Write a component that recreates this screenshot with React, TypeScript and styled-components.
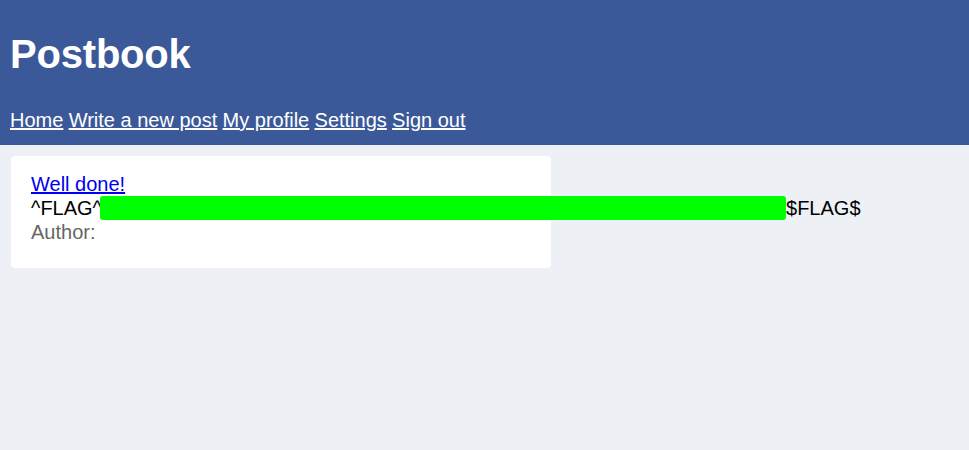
import styled, { createGlobalStyle } from 'styled-components';

const GlobalStyle = createGlobalStyle`
	html, body {
		margin: 0;
		padding: 0;
		background: #edf0f5;
		font-family: "Liberation Sans", Arial, sans-serif;
	}
`;

const Header = styled.header`
	background: #3b5998;
	color: #fff;
	padding: 10px 10px 13px;
`;

const Title = styled.h1`
	margin: 21px 0 32px;
	font-size: 40px;
	line-height: 46px;
	font-weight: bold;
	letter-spacing: -0.2px;
`;

const Nav = styled.nav`
	display: flex;
	gap: 5.3px;
	font-size: 20px;
	line-height: 23px;
`;

const NavLink = styled.a`
	color: #fff;
	text-decoration: underline;
`;

const Main = styled.main`
	padding: 11px;
`;

const Card = styled.article`
	width: 500px;
	background: #fff;
	border-radius: 4px;
	padding: 16px 20px 24px;
	font-size: 20px;
	line-height: 24px;
`;

const PostTitle = styled.a`
	color: #0000ee;
	text-decoration: underline;
`;

const Body = styled.div`
	color: #000;
	white-space: nowrap;
`;

const Redacted = styled.span`
	display: inline-block;
	width: 686px;
	height: 24px;
	margin-left: -2px;
	vertical-align: top;
	background: #00ff00;
	border-radius: 3px;
`;

const Author = styled.div`
	color: #666;
`;

export default function App() {
	return (
		<>
			<GlobalStyle />
			<Header>
				<Title>Postbook</Title>
				<Nav>
					<NavLink href="#">Home</NavLink>
					<NavLink href="#">Write a new post</NavLink>
					<NavLink href="#">My profile</NavLink>
					<NavLink href="#">Settings</NavLink>
					<NavLink href="#">Sign out</NavLink>
				</Nav>
			</Header>
			<Main>
				<Card>
					<div>
						<PostTitle href="#">Well done!</PostTitle>
					</div>
					<Body>
						^FLAG^
						<Redacted />
						$FLAG$
					</Body>
					<Author>Author: </Author>
				</Card>
			</Main>
		</>
	);
}
